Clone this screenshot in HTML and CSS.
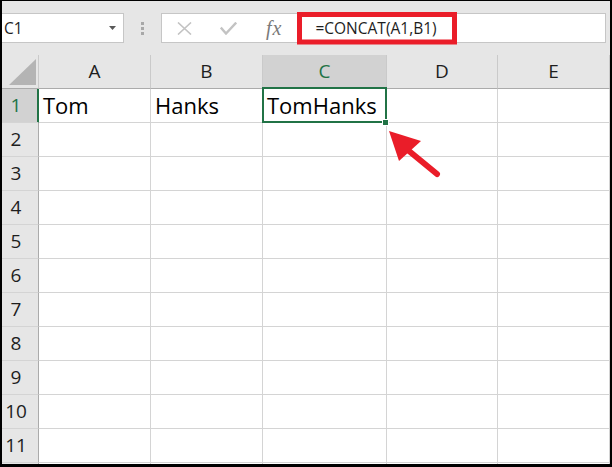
FILE: index.html
```html
<!DOCTYPE html>
<html>
<head>
<meta charset="utf-8">
<link rel="stylesheet" href="styles.css">
</head>
<body>
<div class="frame">
  <div class="toolbar">
    <div class="namebox">
      <span class="ref">C1</span>
      <svg class="drop" width="7" height="4" viewBox="0 0 7 4"><path d="M0 0H7L3.5 4Z" fill="#595959"/></svg>
    </div>
    <div class="grip"><i></i><i></i><i></i></div>
    <div class="fbar">
      <svg class="ic-x" width="15" height="13" viewBox="0 0 15 13"><path d="M1 0.5L14 12.5M14 0.5L1 12.5" stroke="#c3c3c3" stroke-width="1.6" fill="none"/></svg>
      <svg class="ic-check" width="17" height="13" viewBox="0 0 17 13"><path d="M0.8 5.5L6 11.5L16.2 0.6" stroke="#c3c3c3" stroke-width="2.4" fill="none"/></svg>
      <span class="fx">fx</span>
      <span class="formula">=CONCAT(A1,B1)</span>
    </div>
  </div>
  <div class="sheet">
    <div class="hd corner"><svg width="27" height="26" viewBox="0 0 27 26"><path d="M27 0V26H0Z" fill="#b4b4b4"/></svg></div>
    <div class="hd col">A</div>
    <div class="hd col">B</div>
    <div class="hd col sel">C</div>
    <div class="hd col">D</div>
    <div class="hd col">E</div>

    <div class="rh sel">1</div>
    <div class="cell">Tom</div>
    <div class="cell">Hanks</div>
    <div class="cell active">TomHanks<span class="selbox"></span><span class="handle"></span></div>
    <div class="cell"></div>
    <div class="cell"></div>

    <div class="rh">2</div><div class="cell"></div><div class="cell"></div><div class="cell"></div><div class="cell"></div><div class="cell"></div>
    <div class="rh">3</div><div class="cell"></div><div class="cell"></div><div class="cell"></div><div class="cell"></div><div class="cell"></div>
    <div class="rh">4</div><div class="cell"></div><div class="cell"></div><div class="cell"></div><div class="cell"></div><div class="cell"></div>
    <div class="rh">5</div><div class="cell"></div><div class="cell"></div><div class="cell"></div><div class="cell"></div><div class="cell"></div>
    <div class="rh">6</div><div class="cell"></div><div class="cell"></div><div class="cell"></div><div class="cell"></div><div class="cell"></div>
    <div class="rh">7</div><div class="cell"></div><div class="cell"></div><div class="cell"></div><div class="cell"></div><div class="cell"></div>
    <div class="rh">8</div><div class="cell"></div><div class="cell"></div><div class="cell"></div><div class="cell"></div><div class="cell"></div>
    <div class="rh">9</div><div class="cell"></div><div class="cell"></div><div class="cell"></div><div class="cell"></div><div class="cell"></div>
    <div class="rh">10</div><div class="cell"></div><div class="cell"></div><div class="cell"></div><div class="cell"></div><div class="cell"></div>
    <div class="rh">11</div><div class="cell"></div><div class="cell"></div><div class="cell"></div><div class="cell"></div><div class="cell"></div>
    <div class="rh"></div><div class="cell"></div><div class="cell"></div><div class="cell"></div><div class="cell"></div><div class="cell"></div>
  </div>
  <svg class="annot" width="612" height="467" viewBox="0 0 612 467">
    <rect x="299.5" y="14.5" width="155" height="27.5" fill="none" stroke="#ea1d29" stroke-width="5"/>
    <path d="M409 151L437 174" stroke="#ea1d29" stroke-width="6" stroke-linecap="round"/>
    <path d="M389 131L421 141L399 161Z" fill="#ea1d29"/>
  </svg>
</div>
</body>
</html>
```

FILE: styles.css
```css
html, body {
  margin: 0;
  padding: 0;
  background: #fff;
}

.frame {
  width: 612px;
  height: 467px;
  box-sizing: border-box;
  border: 2px solid #000;
  border-top-width: 1px;
  border-bottom-width: 3px;
  background: #e6e6e6;
  position: relative;
  overflow: hidden;
  font-family: "Open Sans", sans-serif;
}

.toolbar {
  height: 54px;
  box-sizing: border-box;
  padding-top: 12px;
  display: flex;
  align-items: flex-start;
}

.namebox {
  width: 122px;
  height: 30px;
  box-sizing: border-box;
  background: #fff;
  border: 1px solid #c6c6c6;
  border-left: 0;
  display: flex;
  align-items: center;
  justify-content: space-between;
  padding-left: 2px;
  padding-right: 7px;
  font-size: 15.5px;
  color: #1e1e1e;
}

.grip {
  width: 37px;
  height: 30px;
  display: flex;
  flex-direction: column;
  align-items: center;
  justify-content: center;
  gap: 2px;
}

.grip i {
  display: block;
  width: 3px;
  height: 3px;
  background: #a8a8a8;
}

.fbar {
  width: 445px;
  height: 30px;
  box-sizing: border-box;
  background: #fff;
  border: 1px solid #c6c6c6;
  display: flex;
  align-items: center;
}

.ic-x {
  margin-left: 15px;
}

.ic-check {
  margin-left: 28px;
}

.fx {
  margin-left: 29px;
  font-family: "Liberation Serif", serif;
  font-style: italic;
  font-size: 20px;
  letter-spacing: 1px;
  color: #7a7a7a;
  line-height: 20px;
}

.formula {
  margin-left: 33px;
  font-size: 15.5px;
  color: #1e1e1e;
}

.sheet {
  display: grid;
  grid-template-columns: 37px 112px 112px 124px 111px 112px;
  grid-auto-rows: 34px;
  background: #fff;
}

.sheet > div {
  box-sizing: border-box;
  border-right: 1px solid #d4d4d4;
  border-bottom: 1px solid #d4d4d4;
}

.hd {
  background: #e6e6e6;
  font-size: 19px;
  line-height: 33px;
  text-align: center;
  color: #1e1e1e;
}

.sheet > .hd {
  border-right-color: #cacaca;
  border-bottom-color: #ababab;
}

.corner {
  display: flex;
  align-items: flex-end;
  justify-content: flex-end;
  padding: 0 2px 3px 0;
}

.corner svg {
  display: block;
}

.hd.sel {
  background: #d2d2d2;
  color: #217346;
}

.rh {
  background: #e6e6e6;
  font-size: 19px;
  line-height: 33px;
  text-align: center;
  padding-right: 8px;
  color: #1e1e1e;
}

.sheet > .rh {
  border-right-color: #ababab;
}

.sheet > .rh.sel {
  background: #d2d2d2;
  color: #217346;
  border-right-color: #217346;
  box-shadow: inset -1px 0 0 #217346;
}

.cell {
  font-size: 22px;
  line-height: 33px;
  padding-left: 4px;
  color: #000;
  white-space: nowrap;
}

.active {
  position: relative;
}

.selbox {
  position: absolute;
  left: -1px;
  top: -2px;
  right: -1px;
  bottom: -1px;
  border: 2px solid #217346;
}

.handle {
  position: absolute;
  width: 5px;
  height: 5px;
  right: -3px;
  bottom: -4px;
  background: #217346;
  border: 1px solid #fff;
}

.annot {
  position: absolute;
  left: -2px;
  top: -1px;
  pointer-events: none;
}
```
